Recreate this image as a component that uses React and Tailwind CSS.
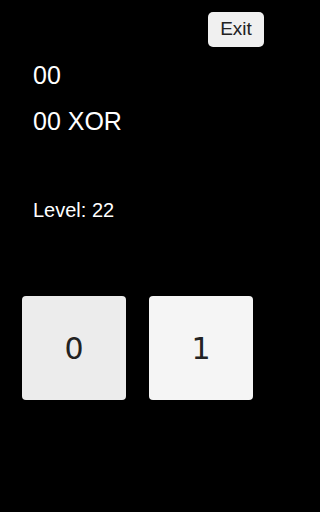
export default function App() {
  return (
    <div className="w-full bg-black">
      <div className="h-[512px] w-[269px] bg-black overflow-hidden font-['Liberation_Sans',Arial,sans-serif]">
        <div className="flex justify-end pt-[12px] pr-[5px]">
          <button className="h-[35px] w-[56px] rounded-[5px] bg-[#f0f0f0] text-[19px] text-[#222] flex items-center justify-center">
            Exit
          </button>
        </div>

        <div className="mt-[5px] pl-[33px] text-white text-[25px] leading-[46px]">
          <div>00</div>
          <div>00 XOR</div>
        </div>

        <div className="mt-[54px] pl-[33px] text-white text-[20px] leading-[24px]">Level: 22</div>

        <div className="mt-[74px] ml-[22px] flex gap-[23px] font-['DejaVu_Sans',sans-serif]">
          <button className="w-[104px] h-[104px] rounded-[4px] bg-[#ececec] text-[#222] text-[30px] flex items-center justify-center">
            0
          </button>
          <button className="w-[104px] h-[104px] rounded-[4px] bg-[#f5f5f5] text-[#222] text-[30px] flex items-center justify-center">
            1
          </button>
        </div>
      </div>
    </div>
  );
}
